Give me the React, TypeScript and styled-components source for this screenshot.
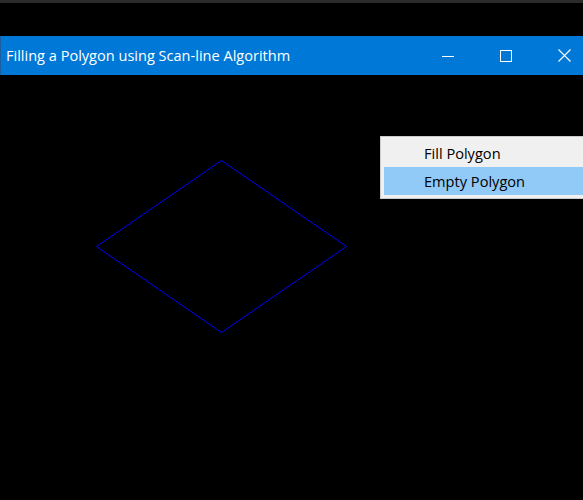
import React from "react";
import styled, { createGlobalStyle } from "styled-components";

const Global = createGlobalStyle`
  html, body { margin: 0; padding: 0; background: #000; }
  body { width: 583px; height: 500px; overflow: hidden; font-family: "Open Sans", "Noto Sans", sans-serif; }
`;

const Page = styled.div`
  width: 583px;
  height: 500px;
  display: flex;
  flex-direction: column;
  background: #000;
  overflow: hidden;
`;

const TopStrip = styled.div`
  height: 3px;
  background: #2b2b2b;
`;

const Gap = styled.div`
  height: 33px;
  background: #000;
`;

const TitleBar = styled.div`
  width: 593px;
  height: 39px;
  flex: none;
  background: #0078d7;
  display: flex;
  align-items: center;
  color: #fff;
  border-left: 1px solid #1a5fa0;
  box-sizing: border-box;
`;

const Title = styled.div`
  flex: 1;
  padding-left: 5px;
  font-size: 14.55px;
  white-space: nowrap;
  margin-top: -1px;
`;

const CtrlButton = styled.div`
  width: 58px;
  height: 39px;
  display: flex;
  align-items: center;
  justify-content: center;
`;

const Canvas = styled.div`
  flex: 1;
  position: relative;
  background: #000;
`;

const Drawing = styled.svg`
  display: block;
  margin: 84px 0 0 95px;
`;

const Menu = styled.div`
  position: absolute;
  left: 380px;
  top: 61px;
  width: 220px;
  background: #f0f0f0;
  border: 1px solid #cccccc;
  padding: 2px 3px 3px 3px;
  box-sizing: border-box;
  display: flex;
  flex-direction: column;
`;

const MenuItem = styled.div<{ $active?: boolean }>`
  height: 28px;
  display: flex;
  align-items: center;
  padding-left: 40px;
  font-size: 14.6px;
  color: #000;
  background: ${(p) => (p.$active ? "#91c9f7" : "transparent")};
`;

export default function App() {
  return (
    <>
      <Global />
      <Page>
        <TopStrip />
        <Gap />
        <TitleBar>
          <Title>Filling a Polygon using Scan-line Algorithm</Title>
          <CtrlButton>
            <svg width="12" height="12" viewBox="0 0 12 12">
              <rect x="0" y="6" width="12" height="1" fill="#fff" />
            </svg>
          </CtrlButton>
          <CtrlButton>
            <svg width="12" height="12" viewBox="0 0 12 12">
              <rect x="0.5" y="0.5" width="11" height="11" fill="none" stroke="#fff" strokeWidth="1" />
            </svg>
          </CtrlButton>
          <CtrlButton>
            <svg width="13" height="13" viewBox="0 0 13 13">
              <path d="M0.5 0.5 L12.5 12.5 M12.5 0.5 L0.5 12.5" stroke="#fff" strokeWidth="1.1" />
            </svg>
          </CtrlButton>
        </TitleBar>
        <Canvas>
          <Drawing width="254" height="175" viewBox="95 159 254 175">
            <polygon
              points="221.5,160.5 346.5,246.5 221.5,332.5 96.5,246.5"
              fill="none"
              stroke="#0000ff"
              strokeWidth="1"
            />
          </Drawing>
          <Menu>
            <MenuItem>Fill Polygon</MenuItem>
            <MenuItem $active>Empty Polygon</MenuItem>
          </Menu>
        </Canvas>
      </Page>
    </>
  );
}
